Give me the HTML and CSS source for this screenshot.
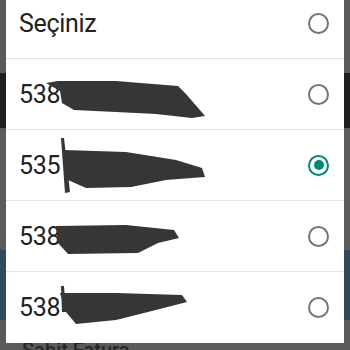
FILE: index.html
```html
<!DOCTYPE html>
<html>
<head>
<meta charset="utf-8">
<link rel="stylesheet" href="styles.css">
</head>
<body>
<div class="bg">
  <div class="band b1"></div>
  <div class="band b2"></div>
  <div class="band b3"></div>
  <div class="band b4"></div>
  <div class="band b5"><span class="bg-text">Sabit Fatura</span></div>
</div>
<div class="dialog">
  <div class="row head">
    <span class="label">Seçiniz</span>
    <span class="radio"></span>
  </div>
  <div class="row">
    <span class="label">538</span>
    <svg class="scribble" width="338" height="70" viewBox="0 0 338 70"><path d="M40 24 L52 22 L110 22 L172 27 L180 35 L199 57 L186 59 L150 55 L110 53 L68 51 L56 44 L54 32 Z"/></svg>
    <span class="radio"></span>
  </div>
  <div class="row">
    <span class="label">535</span>
    <svg class="scribble" width="338" height="70" viewBox="0 0 338 70"><path d="M58 20 L120 22 L170 30 L196 38 L199 47 L160 50 L125 57 L80 58 L62 50 Z"/><path d="M55 8 L58 8 L64 62 L59 63 Z"/></svg>
    <span class="radio on"></span>
  </div>
  <div class="row">
    <span class="label">538</span>
    <svg class="scribble" width="338" height="70" viewBox="0 0 338 70"><path d="M50 25 L120 24 L168 29 L173 37 L152 42 L132 52 L62 53 L52 42 Z"/></svg>
    <span class="radio"></span>
  </div>
  <div class="row">
    <span class="label">538</span>
    <svg class="scribble" width="338" height="70" viewBox="0 0 338 70"><path d="M54 21 L110 21 L176 23 L181 30 L142 40 L110 48 L70 52 L60 40 Z"/><path d="M55 14 L58 14 L60 40 L56 40 Z"/></svg>
    <span class="radio"></span>
  </div>
</div>
</body>
</html>
```
FILE: styles.css
```css
html, body {
  margin: 0;
  padding: 0;
}
body {
  width: 350px;
  height: 350px;
  overflow: hidden;
  position: relative;
  background: #5a5a5a;
  font-family: Roboto, "Liberation Sans", sans-serif;
}
.bg {
  display: flex;
  flex-direction: column;
  height: 350px;
}
.band { width: 100%; }
.b1 { height: 73px; background: #5a5a5a; }
.b2 { height: 55px; background: #1f1f1f; }
.b3 { height: 122px; background: #5b5b5b; }
.b4 { height: 70px; background: #2f4b5a; }
.b5 { flex: 1; background: #5a5a5a; position: relative; }
.bg-text {
  position: absolute;
  left: 22px;
  top: 20px;
  font-size: 20px;
  font-weight: 500;
  color: #262626;
  line-height: 20px;
}
.dialog {
  position: absolute;
  left: 6px;
  top: -12px;
  width: 338px;
  height: 355px;
  background: #ffffff;
  display: flex;
  flex-direction: column;
}
.row {
  position: relative;
  height: 70px;
  border-bottom: 1px solid #e2e2e2;
  display: flex;
  align-items: center;
  justify-content: space-between;
  padding: 0 15px 0 13px;
  flex-shrink: 0;
}
.row:last-child { border-bottom: none; }
.label {
  font-size: 25px;
  color: #212121;
  letter-spacing: -0.3px;
}
.scribble {
  position: absolute;
  left: 0;
  top: 0;
  fill: #363636;
}
.radio {
  width: 17px;
  height: 17px;
  border: 2px solid #757575;
  border-radius: 50%;
  box-sizing: content-box;
  display: flex;
  align-items: center;
  justify-content: center;
}
.radio.on {
  border-color: #00897b;
}
.radio.on::after {
  content: "";
  width: 10px;
  height: 10px;
  border-radius: 50%;
  background: #00897b;
}
```
